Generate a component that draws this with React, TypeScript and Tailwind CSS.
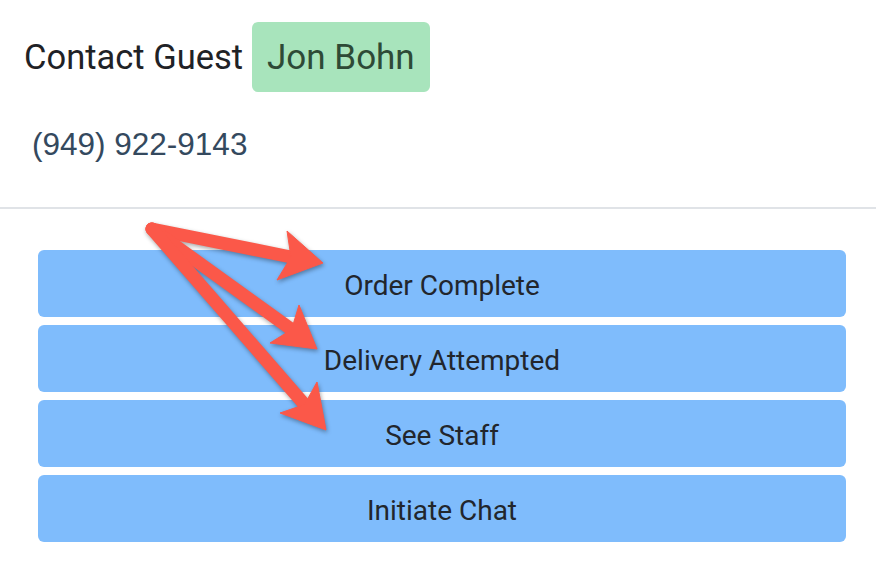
const actions = ["Order Complete", "Delivery Attempted", "See Staff", "Initiate Chat"];

// start point shared by the three callout arrows
const start = "152,229";
const arrows = [
  { notch: "291,257", head: "323,263 287,231 291,257 277,280" },
  { notch: "291.6,329.5", head: "317,349 299,305 291.6,329.5 270,343" },
  { notch: "304.5,404.6", head: "326,430 317,382 304.5,404.6 280,413" },
];

function Arrows() {
  return (
    <svg
      className="absolute inset-0 pointer-events-none drop-shadow-[1px_2px_2px_rgba(0,0,0,0.35)]"
      width={876}
      height={582}
      viewBox="0 0 876 582"
    >
      {arrows.map((a, i) => {
        const [sx, sy] = start.split(",");
        const [nx, ny] = a.notch.split(",");
        return (
          <g key={i} fill="#fb5849" stroke="#fb5849">
            <line x1={sx} y1={sy} x2={nx} y2={ny} strokeWidth={13} strokeLinecap="round" />
            <polygon points={a.head} strokeWidth={1} strokeLinejoin="miter" />
          </g>
        );
      })}
    </svg>
  );
}

export default function App() {
  return (
    <main className="relative w-[876px] h-[582px] bg-white overflow-hidden">
      <section className="pt-[22px] pl-[24px]">
        <div className="flex items-center">
          <h1 className="text-[34.5px] leading-none text-[#1f2226] font-['Roboto',sans-serif]">
            Contact Guest
          </h1>
          <span className="ml-[9px] h-[70px] px-[15px] pt-[2px] flex items-center rounded-md bg-[#a8e4bc] text-[35px] text-[#2e4a36] font-['Roboto',sans-serif]">
            Jon Bohn
          </span>
        </div>
        <p className="mt-[34px] ml-[8px] text-[31.5px] leading-[36px] text-[#34495e] font-['Liberation_Sans',Arial,sans-serif]">
          (949) 922-9143
        </p>
      </section>
      <div className="mt-[45px] border-t-2 border-[#e0e3e7]" />
      <div className="mt-[41px] ml-[38px] mr-[30px] flex flex-col gap-2">
        {actions.map((label) => (
          <button
            key={label}
            className="h-[67px] w-full pt-[5px] rounded-md bg-[#7fbcfc] text-[28px] text-[#22262c] font-['Roboto',sans-serif]"
          >
            {label}
          </button>
        ))}
      </div>
      <Arrows />
    </main>
  );
}
